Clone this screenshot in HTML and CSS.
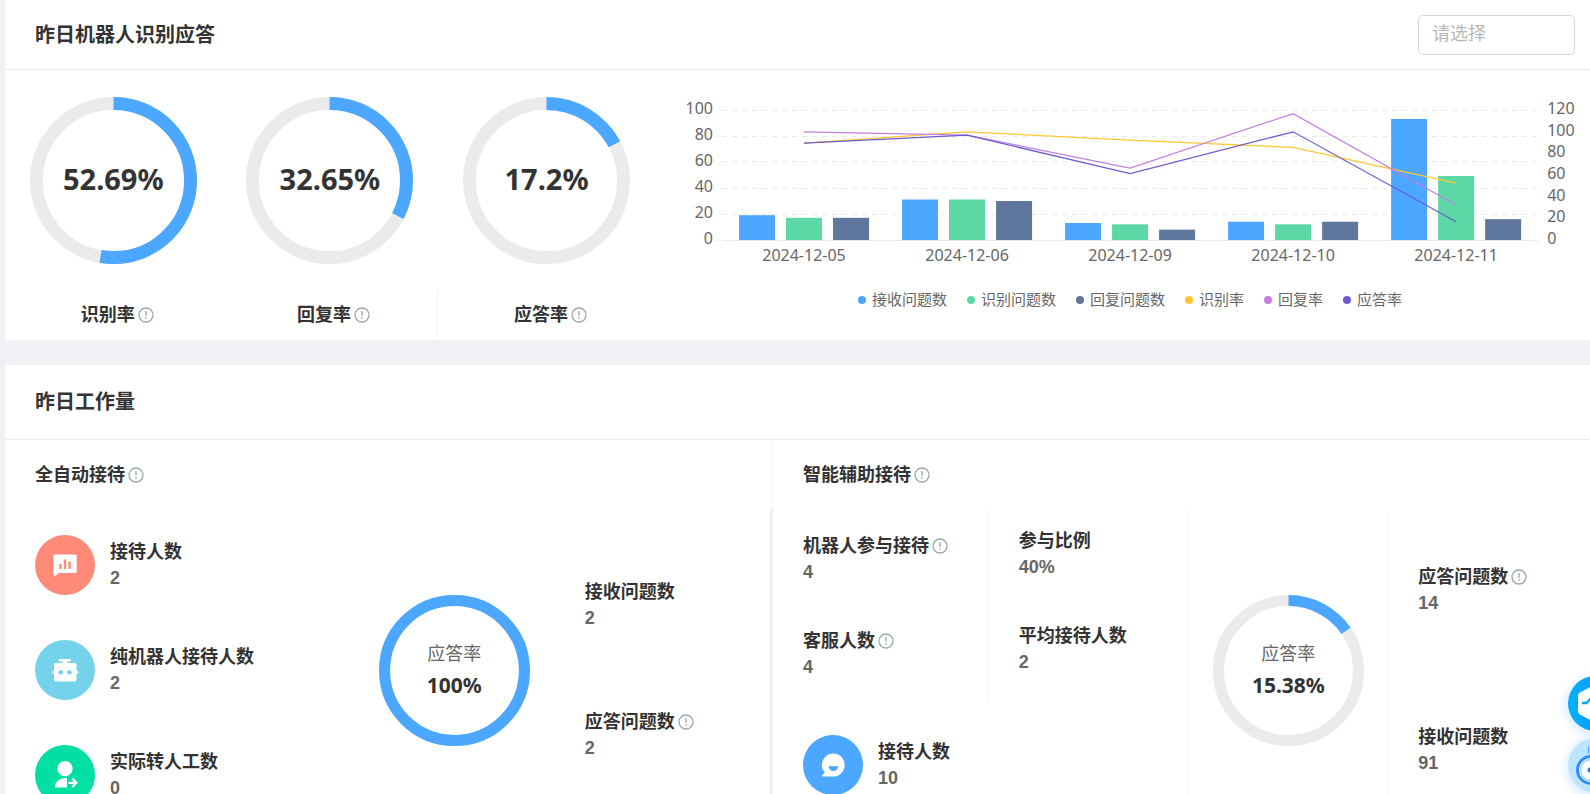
FILE: index.html
```html
<!DOCTYPE html>
<html lang="zh-CN">
<head>
<meta charset="utf-8">
<title>昨日数据</title>
<link rel="stylesheet" href="styles.css">
</head>
<body>
<svg class="defs" aria-hidden="true">
  <symbol id="info" viewBox="0 0 16 16">
    <circle cx="8" cy="8" r="7" fill="none" stroke="#9aa9a7" stroke-width="1.3"/>
    <path d="M8 4.2v4.6M8 10.2v1.6" stroke="#9aa9a7" stroke-width="1.4"/>
  </symbol>
</svg>
<main class="page">
  <section class="panel">
    <header class="head head-answer">
      <h2>昨日机器人识别应答</h2>
      <input class="picker" type="text" placeholder="请选择" aria-label="请选择">
    </header>
    <div class="answer">
      <div class="rates">
        <div class="rate">
          <div class="ring ring-lg">
            <svg viewBox="0 0 168 168"><circle class="track" cx="84" cy="84" r="77.5"/><circle class="arc" cx="84" cy="84" r="77.5" pathLength="100" stroke-dasharray="52.69 100"/></svg>
            <div class="ring-text"><strong>52.69%</strong></div>
          </div>
          <div class="rate-name">识别率<svg class="info"><use href="#info"/></svg></div>
        </div>
        <div class="rate">
          <div class="ring ring-lg">
            <svg viewBox="0 0 168 168"><circle class="track" cx="84" cy="84" r="77.5"/><circle class="arc" cx="84" cy="84" r="77.5" pathLength="100" stroke-dasharray="32.65 100"/></svg>
            <div class="ring-text"><strong>32.65%</strong></div>
          </div>
          <div class="rate-name rate-line">回复率<svg class="info"><use href="#info"/></svg></div>
        </div>
        <div class="rate">
          <div class="ring ring-lg">
            <svg viewBox="0 0 168 168"><circle class="track" cx="84" cy="84" r="77.5"/><circle class="arc" cx="84" cy="84" r="77.5" pathLength="100" stroke-dasharray="17.2 100"/></svg>
            <div class="ring-text"><strong>17.2%</strong></div>
          </div>
          <div class="rate-name">应答率<svg class="info"><use href="#info"/></svg></div>
        </div>
      </div>
      <div class="chart">
        <svg class="plot" viewBox="0 0 920 200" role="img" aria-label="识别应答趋势">
          <g class="grid">
            <path d="M52 40.5H868M52 66.5H868M52 91.5H868M52 118.5H868M52 144.5H868" stroke-dasharray="5 5"/>
            <path d="M52 170.5H868"/>
          </g>
          <g fill="#4ba7ff">
            <rect x="69" y="145.2" width="36" height="24.8"/><rect x="232" y="129.5" width="36" height="40.5"/><rect x="395" y="153" width="36" height="17"/><rect x="558" y="151.7" width="36" height="18.3"/><rect x="721" y="49" width="36" height="121"/>
          </g>
          <g fill="#5cd8a6">
            <rect x="116" y="147.8" width="36" height="22.2"/><rect x="279" y="129.5" width="36" height="40.5"/><rect x="442" y="154.3" width="36" height="15.7"/><rect x="605" y="154.3" width="36" height="15.7"/><rect x="768" y="106" width="36" height="64"/>
          </g>
          <g fill="#5f769d">
            <rect x="163" y="147.8" width="36" height="22.2"/><rect x="326" y="131" width="36" height="39"/><rect x="489" y="159.6" width="36" height="10.4"/><rect x="652" y="151.7" width="36" height="18.3"/><rect x="815" y="149.1" width="36" height="20.9"/>
          </g>
          <g class="lines">
            <path stroke="#ffc72e" d="M134 73l163-11.2 163 8.3 163 7.2 163 35.9"/>
            <path stroke="#c37ee3" d="M134 61.8l163 3.4 163 32.8 163-54.4 163 91.4"/>
            <path stroke="#6c5bd0" d="M134 73l163-7.8 163 38.4 163-41.8 163 90"/>
          </g>
          <g class="axis" text-anchor="end">
            <text x="43" y="44">100</text><text x="43" y="70">80</text><text x="43" y="96">60</text><text x="43" y="122">40</text><text x="43" y="148">20</text><text x="43" y="174">0</text>
          </g>
          <g class="axis">
            <text x="877" y="44">120</text><text x="877" y="66">100</text><text x="877" y="87">80</text><text x="877" y="109">60</text><text x="877" y="131">40</text><text x="877" y="152">20</text><text x="877" y="174">0</text>
          </g>
          <g class="axis" text-anchor="middle">
            <text x="134" y="191">2024-12-05</text><text x="297" y="191">2024-12-06</text><text x="460" y="191">2024-12-09</text><text x="623" y="191">2024-12-10</text><text x="786" y="191">2024-12-11</text>
          </g>
        </svg>
        <ul class="legend">
          <li class="c-blue">接收问题数</li>
          <li class="c-green">识别问题数</li>
          <li class="c-slate">回复问题数</li>
          <li class="c-yellow">识别率</li>
          <li class="c-purple">回复率</li>
          <li class="c-indigo">应答率</li>
        </ul>
      </div>
    </div>
  </section>

  <section class="panel">
    <header class="head head-work"><h2>昨日工作量</h2></header>
    <div class="work">
      <div class="auto">
        <h3>全自动接待<svg class="info"><use href="#info"/></svg></h3>
        <div class="auto-body">
          <div class="people">
            <div class="person">
              <svg class="badge" viewBox="0 0 60 60"><circle cx="30" cy="30" r="30" fill="#ff8a78"/><path fill="#fff" d="M20 19.500h20.500q1.200 0 1.200 1.200v16.200q0 1.200-1.200 1.200H24.200L18.500 42V21q0-1.500 1.500-1.500z"/><path d="M25.500 29v5M30 24.500V34M34.600 26.500V34" stroke="#ff8a78" stroke-width="2.400"/></svg>
              <dl><dt>接待人数</dt><dd>2</dd></dl>
            </div>
            <div class="person">
              <svg class="badge" viewBox="0 0 60 60"><circle cx="30" cy="30" r="30" fill="#74d2ea"/><path fill="#fff" d="M25 19h10q1.200 0 1.200 1.300t-1.200 1.300h-2.500V23H40q1.500 0 1.500 1.500v6.300h.8q1.100 0 1.100 1.500t-1.100 1.500h-.8V40q0 1.400-1.500 1.400H20.500q-1.500 0-1.500-1.400v-6.200h-.5q-1.200 0-1.200-1.500t1.200-1.500h.5v-6.300Q19 23 20.500 23h7.200v-1.400H25q-1.200 0-1.200-1.300T25 19z"/><circle cx="25.800" cy="32.300" r="2.300" fill="#74d2ea"/><circle cx="34.400" cy="32.300" r="2.300" fill="#74d2ea"/></svg>
              <dl><dt>纯机器人接待人数</dt><dd>2</dd></dl>
            </div>
            <div class="person">
              <svg class="badge" viewBox="0 0 60 60"><circle cx="30" cy="30" r="30" fill="#02dfa5"/><circle cx="30" cy="23.700" r="7.600" fill="#fff"/><path fill="#fff" d="M32 32.700V42.500H21q-1.400 0-1.100-1.500 1.500-8 12.100-8.300z"/><path d="M33.500 37.800h7.500M37.200 33.500l4.300 4.300-4.300 4.200" fill="none" stroke="#fff" stroke-width="2.200"/></svg>
              <dl><dt>实际转人工数</dt><dd>0</dd></dl>
            </div>
          </div>
          <div class="ring ring-md">
            <svg viewBox="0 0 150 150"><circle class="track" cx="75" cy="75" r="69.500"/><circle class="arc" cx="75" cy="75" r="69.500"/></svg>
            <div class="ring-text"><span>应答率</span><strong>100%</strong></div>
          </div>
          <div class="auto-stats">
            <dl><dt>接收问题数</dt><dd>2</dd></dl>
            <dl><dt>应答问题数<svg class="info"><use href="#info"/></svg></dt><dd>2</dd></dl>
          </div>
        </div>
      </div>
      <div class="assist">
        <h3>智能辅助接待<svg class="info"><use href="#info"/></svg></h3>
        <div class="assist-body">
          <div class="assist-people">
            <div class="assist-grid">
              <div class="cell cell-first">
                <dl><dt>机器人参与接待<svg class="info"><use href="#info"/></svg></dt><dd>4</dd></dl>
                <dl><dt>客服人数<svg class="info"><use href="#info"/></svg></dt><dd>4</dd></dl>
              </div>
              <div class="cell cell-second">
                <dl><dt>参与比例</dt><dd>40%</dd></dl>
                <dl><dt>平均接待人数</dt><dd>2</dd></dl>
              </div>
            </div>
            <div class="person person-assist">
              <svg class="badge" viewBox="0 0 60 60"><circle cx="30" cy="30" r="30" fill="#4ba7ff"/><path fill="#fff" d="M30.200 18.500a11.500 11.500 0 0 1 0 23H19.800q-1.300-.6-.2-1.700l2.200-2.200a11.500 11.500 0 0 1 8.400-19.100z"/><path fill="#4ba7ff" d="M25.500 31.200h9.600q-.5 4.700-4.800 4.700t-4.800-4.700z"/></svg>
              <dl><dt>接待人数</dt><dd>10</dd></dl>
            </div>
          </div>
          <div class="assist-rate">
            <div class="ring ring-md">
              <svg viewBox="0 0 150 150"><circle class="track" cx="75" cy="75" r="69.500"/><circle class="arc" cx="75" cy="75" r="69.500" pathLength="100" stroke-dasharray="15.38 100"/></svg>
              <div class="ring-text"><span>应答率</span><strong>15.38%</strong></div>
            </div>
          </div>
          <div class="assist-stats">
            <dl><dt>应答问题数<svg class="info"><use href="#info"/></svg></dt><dd>14</dd></dl>
            <dl><dt>接收问题数</dt><dd>91</dd></dl>
          </div>
        </div>
      </div>
    </div>
  </section>
</main>
<aside class="float">
  <button type="button" aria-label="客服"><svg viewBox="0 0 55 55"><defs><linearGradient id="g" x1="0" x2="1"><stop stop-color="#03b1fb"/><stop offset="1" stop-color="#0a8dff"/></linearGradient></defs><circle cx="27.500" cy="27.500" r="27.500" fill="url(#g)"/><path fill="#fff" d="M25 9.500q2.500-1.200 5 0l13 7q2 1.200 2 3v16q0 2-2 3l-13 7q-2.500 1.200-5 0l-13-7q-2-1-2-3v-16q0-2 2-3z"/><path d="M14 27h4.500l4-4.500 8 8 4-3.500H41" fill="none" stroke="#05a6fc" stroke-width="2.400"/></svg></button>
  <button type="button" aria-label="机器人"><svg viewBox="0 0 55 55"><circle cx="27.500" cy="27.500" r="27.500" fill="#bde5ff"/><path d="M20.500 8.500v7M34.500 8.500v7" stroke="#4ba7ff" stroke-width="1.200"/><rect x="9.500" y="18.500" width="36" height="27" rx="13.500" fill="#fff" stroke="#2d8ff8" stroke-width="3"/><rect x="12.500" y="21.500" width="30" height="21" rx="10.500" fill="none" stroke="#a9d4ff" stroke-width="1.500"/><circle cx="22" cy="32" r="2.500" fill="#1680f5"/><circle cx="33" cy="32" r="2.500" fill="#1680f5"/></svg></button>
</aside>
</body>
</html>
```
FILE: styles.css
```css
* {
  box-sizing: border-box;
}

body {
  margin: 0;
  background: #f0f1f5;
  color: #333;
  font: 18px/26px "Liberation Sans", "Noto Sans CJK SC", sans-serif;
}

h2, h3, dl, dd, ul {
  margin: 0;
  padding: 0;
}

.defs {
  display: none;
}

.page {
  display: flex;
  flex-direction: column;
  gap: 25px;
  height: 100vh;
  padding-left: 5px;
  overflow: hidden;
}

.panel {
  flex: none;
  background: #fff;
}

.head {
  display: flex;
  align-items: center;
  justify-content: space-between;
  padding: 0 15px 0 30px;
  border-bottom: 1px solid #ebebeb;
}

.head-answer {
  height: 70px;
}

.head-work {
  height: 75px;
}

h2 {
  font-size: 20px;
  line-height: 30px;
}

.picker {
  width: 157px;
  height: 40px;
  padding: 0 13px;
  border: 1px solid #d8d8d8;
  border-radius: 5px;
  background: #fff;
  font: inherit;
}

.picker::placeholder {
  color: #b8b8b8;
}

.info {
  width: 16px;
  height: 16px;
  flex: none;
}

.answer {
  display: grid;
  grid-template-columns: 41fr 59fr;
}

.rates {
  display: grid;
  grid-template-columns: repeat(3, 1fr);
}

.rate {
  display: flex;
  flex-direction: column;
  align-items: center;
  justify-content: space-between;
  padding-top: 27px;
}

.rate-name {
  display: flex;
  align-items: center;
  justify-content: center;
  gap: 3px;
  width: 100%;
  height: 50px;
  padding-left: 8px;
  font-weight: bold;
}

.rate-line {
  border-right: 1px solid #f4f4f4;
}

.ring {
  display: grid;
  place-items: center;
}

.ring > * {
  grid-area: 1 / 1;
}

.ring svg {
  width: 100%;
  transform: rotate(-90deg);
}

.ring circle {
  fill: none;
}

.ring-lg {
  width: 167px;
  stroke-width: 13px;
}

.ring-md {
  width: 151px;
  stroke-width: 11px;
}

.track {
  stroke: #ebebeb;
}

.arc {
  stroke: #4ba7ff;
}

.ring-text {
  display: flex;
  flex-direction: column;
  align-items: center;
  gap: 4px;
  z-index: 1;
}

.ring-lg .ring-text {
  padding-bottom: 4px;
}

.ring-text span {
  color: #666;
}

.ring-text strong {
  font: bold 29px/36px "Noto Sans", sans-serif;
}

.ring-md strong {
  font-size: 21px;
  line-height: 28px;
}

.chart {
  display: flex;
  flex-direction: column;
  padding: 0 0 27px 15px;
}

.plot {
  display: block;
  width: 100%;
}

.grid path {
  stroke: #ebebeb;
}

.lines path {
  fill: none;
  stroke-width: 1.25px;
}

.axis {
  fill: #666;
  font: 16px "Noto Sans", sans-serif;
}

.legend {
  display: flex;
  justify-content: center;
  gap: 20px;
  margin-top: 17px;
  list-style: none;
  color: #666;
  font-size: 15px;
}

.legend li {
  display: flex;
  align-items: center;
  gap: 6px;
}

.legend li::before {
  content: "";
  width: 8px;
  height: 8px;
  border-radius: 50%;
  background: var(--dot);
}

.c-blue { --dot: #4ba7ff; }
.c-green { --dot: #5cd8a6; }
.c-slate { --dot: #5f769d; }
.c-yellow { --dot: #ffc72e; }
.c-purple { --dot: #c37ee3; }
.c-indigo { --dot: #6c5bd0; }

.work {
  display: grid;
  grid-template-columns: 767fr 818fr;
}

h3 {
  display: flex;
  align-items: center;
  gap: 3px;
  height: 70px;
  padding-left: 30px;
  font-size: 18px;
}

dt {
  display: flex;
  align-items: center;
  gap: 3px;
  font-weight: bold;
}

dd {
  color: #666;
  font-weight: bold;
  line-height: 27px;
}

.auto-body {
  display: grid;
  grid-template-columns: 375fr 151fr 241fr;
  align-items: center;
  border-right: 2px solid #efefef;
}

.people {
  display: flex;
  flex-direction: column;
  gap: 45px;
  padding: 25px 0 25px 30px;
}

.person {
  display: flex;
  align-items: center;
  gap: 15px;
}

.badge {
  width: 60px;
  height: 60px;
  flex: none;
}

.auto-stats {
  display: flex;
  flex-direction: column;
  gap: 77px;
  padding-left: 55px;
}

.assist {
  display: flex;
  flex-direction: column;
  border-left: 1px solid #f4f4f4;
}

.assist-body {
  display: grid;
  grid-template-columns: 416fr 200fr 202fr;
  flex: 1;
}

.assist-grid {
  display: grid;
  grid-template-columns: 216fr 200fr;
}

.cell {
  display: flex;
  flex-direction: column;
  gap: 42px;
  height: 190px;
  padding-left: 30px;
}

.cell-first {
  padding-top: 23px;
  border-right: 1px solid #f4f4f4;
}

.cell-second {
  padding-top: 18px;
}

.person-assist {
  padding: 35px 0 0 30px;
}

.assist-rate {
  display: flex;
  align-items: center;
  justify-content: center;
  border-left: 1px solid #f8f8f8;
  border-right: 1px solid #fafafa;
}

.assist-stats {
  display: flex;
  flex-direction: column;
  justify-content: center;
  gap: 107px;
  padding-left: 30px;
}

.float {
  position: fixed;
  right: -33px;
  bottom: 1px;
  display: flex;
  flex-direction: column;
  gap: 7px;
}

.float button {
  width: 55px;
  height: 55px;
  padding: 0;
  border: 0;
  border-radius: 50%;
  background: none;
  box-shadow: 0 2px 12px #4ba7ff55;
}

.float svg {
  display: block;
}
```
